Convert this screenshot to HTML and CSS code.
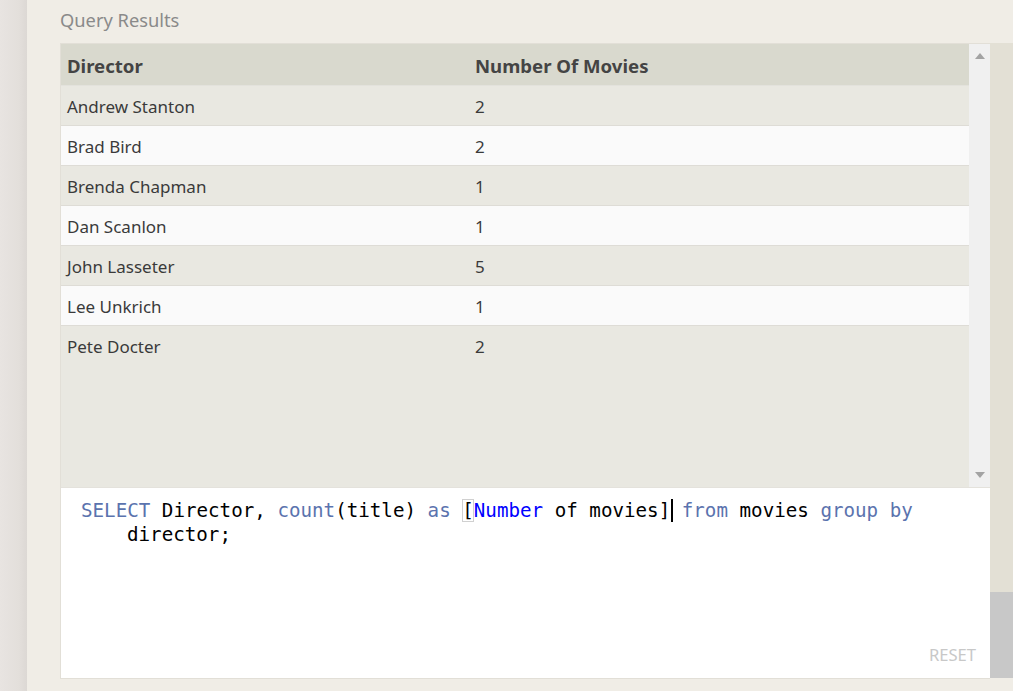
FILE: index.html
```html
<!DOCTYPE html>
<html>
<head>
<meta charset="utf-8">
<link rel="stylesheet" href="styles.css">
</head>
<body>
<div class="sidebar"></div>
<div class="content">
  <div class="title">Query Results</div>
  <div class="panel">
    <div class="box">
      <div class="results">
        <div class="table-wrap">
          <table class="grid">
            <thead>
              <tr><th class="c1">Director</th><th>Number Of Movies</th></tr>
            </thead>
            <tbody>
              <tr class="odd"><td>Andrew Stanton</td><td>2</td></tr>
              <tr class="even"><td>Brad Bird</td><td>2</td></tr>
              <tr class="odd"><td>Brenda Chapman</td><td>1</td></tr>
              <tr class="even"><td>Dan Scanlon</td><td>1</td></tr>
              <tr class="odd"><td>John Lasseter</td><td>5</td></tr>
              <tr class="even"><td>Lee Unkrich</td><td>1</td></tr>
              <tr class="odd last"><td>Pete Docter</td><td>2</td></tr>
            </tbody>
          </table>
        </div>
        <div class="vscroll">
          <svg class="arrow" width="10" height="6" viewBox="0 0 10 6"><path d="M0 6 L5 0 L10 6 Z" fill="#a3a3a3"/></svg>
          <svg class="arrow" width="10" height="6" viewBox="0 0 10 6"><path d="M0 0 L5 6 L10 0 Z" fill="#a3a3a3"/></svg>
        </div>
      </div>
      <div class="editor">
        <div class="code">
          <div class="line"><span class="kw">SELECT</span> Director, <span class="kw">count</span>(title) <span class="kw">as</span> <span class="match">[</span><span class="ident">Number</span> of movies]<span class="cursor"></span> <span class="kw">from</span> movies <span class="kw">group</span> <span class="kw">by</span></div>
          <div class="line wrap">director;</div>
        </div>
        <div class="reset">RESET</div>
      </div>
    </div>
    <div class="strip">
      <div class="strip-top"></div>
      <div class="strip-thumb"></div>
    </div>
  </div>
</div>
</body>
</html>
```
FILE: styles.css
```css
html, body {
  margin: 0;
  padding: 0;
}
body {
  background: #f0ede6;
  display: flex;
  height: 691px;
  overflow: hidden;
  font-family: "Noto Sans", "Open Sans", sans-serif;
}
.sidebar {
  width: 27px;
  flex: none;
  background: linear-gradient(to right, #e8e4e1, #e3dfdb 70%, #dcd8d4);
}
.content {
  margin-left: 33px;
  flex: 1;
  display: flex;
  flex-direction: column;
}
.title {
  height: 43px;
  font-size: 18.3px;
  line-height: 40px;
  color: #8a8a8a;
}
.panel {
  display: flex;
}
.box {
  width: 929px;
  border: 1px solid #e2dfd7;
  border-right: none;
  display: flex;
  flex-direction: column;
}
.results {
  height: 443px;
  display: flex;
  background: #e9e8e1;
}
.table-wrap {
  width: 908px;
}
.grid {
  width: 908px;
  table-layout: fixed;
  border-collapse: collapse;
  font-size: 17px;
}
.grid th {
  background: #d9d9ce;
  color: #444;
  font-weight: bold;
  font-size: 18.6px;
  text-align: left;
  height: 39px;
  padding: 2px 0 0 6px;
  border-bottom: 1px solid #e3e2dc;
}
.grid th.c1 {
  width: 402px;
}
.grid td {
  height: 37px;
  padding: 2px 0 0 6px;
  color: #3a3a3a;
  border-bottom: 1px solid #dedcd6;
}
.grid tr.odd td {
  background: #e9e8e1;
}
.grid tr.even td {
  background: #fafafa;
}
.grid tr.last td {
  border-bottom: none;
}
.vscroll {
  width: 21px;
  background: #f0f0f0;
  display: flex;
  flex-direction: column;
  justify-content: space-between;
  align-items: center;
  padding: 9px 0 9px;
  box-sizing: border-box;
}
.arrow {
  display: block;
  margin-left: 1px;
}
.editor {
  height: 190px;
  background: #fff;
  border-top: 1px solid #e4e2dc;
  display: flex;
  flex-direction: column;
}
.code {
  padding: 11px 0 0 20px;
  font-family: "DejaVu Sans Mono", monospace;
  font-size: 19.2px;
  line-height: 24px;
  color: #000;
}
.line {
  white-space: pre;
}
.line.wrap {
  padding-left: 46px;
}
.kw {
  color: #5b73ae;
}
.ident {
  color: #0000ff;
}
.match {
  outline: 1px solid #d0d0d0;
  outline-offset: -1px;
}
.cursor {
  display: inline-block;
  width: 2px;
  height: 23px;
  background: #000;
  vertical-align: -5px;
  margin-left: 1px;
  margin-right: -3px;
}
.reset {
  margin-top: auto;
  align-self: flex-end;
  margin-right: 14px;
  margin-bottom: 12px;
  font-size: 16.6px;
  color: #c8c8c8;
}
.strip {
  width: 23px;
  display: flex;
  flex-direction: column;
}
.strip-top {
  height: 549px;
  background: #e3e0d5;
}
.strip-thumb {
  height: 86px;
  background: #c8c8c8;
}
```
